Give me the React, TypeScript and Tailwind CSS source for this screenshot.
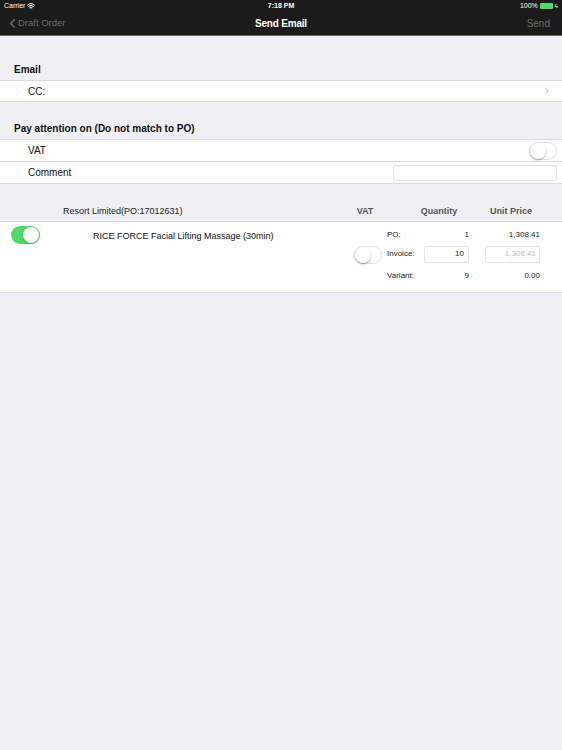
import { ChevronLeft, ChevronRight, Wifi } from 'lucide-react';

function Toggle({ on }: { on: boolean }) {
  return (
    <div
      className={
        on
          ? 'relative w-[29px] h-[18px] rounded-full bg-[#4cd964]'
          : 'relative w-[28px] h-[18px] rounded-full bg-white border border-[#e3e3e6]'
      }
    >
      <div
        className={
          on
            ? 'absolute right-[1px] top-[1px] w-[16px] h-[16px] rounded-full bg-white shadow-[0_1px_2px_rgba(0,0,0,0.3)]'
            : 'absolute left-0 top-0 w-[16px] h-[16px] rounded-full bg-white shadow-[0_1px_2px_rgba(0,0,0,0.35)]'
        }
      />
    </div>
  );
}

export default function App() {
  return (
    <div
      className="w-[562px] h-[750px] bg-[#efeff4] text-[#111] overflow-hidden antialiased"
      style={{ fontFamily: '"Liberation Sans", Arial, sans-serif' }}
    >
      {/* status + nav */}
      <div className="bg-[#1b1b1b] border-b border-[#6a6a6a]">
        <div className="h-[12px] flex items-center justify-between px-[4px] text-[7px] text-white">
          <div className="flex items-center gap-[2px] w-[100px]">
            Carrier <Wifi className="w-[8px] h-[8px]" strokeWidth={3} />
          </div>
          <div className="font-semibold">7:18 PM</div>
          <div className="flex items-center justify-end gap-[2px] w-[100px]">
            100%
            <div className="w-[13px] h-[6px] bg-[#4cd964] rounded-[1px]" />
            <span className="text-[6px]">ϟ</span>
          </div>
        </div>
        <div className="h-[23px] flex items-center justify-between px-[5px]">
          <div className="flex items-center text-[9.5px] text-[#6b6b6b] w-[100px]">
            <ChevronLeft className="w-[15px] h-[15px] -mr-[2px]" strokeWidth={2.5} />
            Draft Order
          </div>
          <div className="text-[10px] font-semibold text-white tracking-[-0.2px]">Send Email</div>
          <div className="w-[100px] text-right text-[10px] text-[#6b6b6b] pr-[7px]">Send</div>
        </div>
      </div>

      {/* Email */}
      <div className="pt-[26px] pb-[3px] px-[14px] text-[10px] font-bold">Email</div>
      <div className="bg-white border-y border-[#dcdce0] h-[22px] flex items-center justify-between pl-[28px] pr-[10px] text-[10px]">
        <span>CC:</span>
        <ChevronRight className="w-[10px] h-[10px] text-[#a8a8ad]" strokeWidth={2} />
      </div>

      {/* Pay attention */}
      <div className="pt-[19px] pb-[3px] px-[14px] text-[10px] font-bold">Pay attention on (Do not match to PO)</div>
      <div className="bg-white border-y border-[#dcdce0]">
        <div className="h-[22px] flex items-center justify-between pl-[28px] pr-[5px] text-[10px] border-b border-[#dcdce0]">
          <span>VAT</span>
          <Toggle on={false} />
        </div>
        <div className="h-[21px] flex items-center justify-between pl-[28px] pr-[5px] text-[10px]">
          <span>Comment</span>
          <div className="w-[164px] h-[16px] border border-[#e3e3e6] rounded-[2px]" />
        </div>
      </div>

      {/* Items header */}
      <div className="h-[37px] flex items-end pb-[3px] text-[9px]">
        <div className="pl-[63px] w-[340px] text-[#222]">Resort Limited(PO:17012631)</div>
        <div className="w-[50px] text-center font-bold text-[#555]">VAT</div>
        <div className="w-[98px] text-center font-bold text-[#555]">Quantity</div>
        <div className="w-[46px] text-center font-bold text-[#555] whitespace-nowrap">Unit Price</div>
      </div>

      {/* Item row */}
      <div className="bg-white border-y border-[#dcdce0] h-[72px] flex">
        <div className="pl-[11px] pt-[4px] w-[93px]">
          <Toggle on />
        </div>
        <div className="pt-[8px] w-[261px] text-[9px]">RICE FORCE Facial Lifting Massage (30min)</div>
        <div className="w-[33px] pt-[24px]">
          <Toggle on={false} />
        </div>
        <div className="flex flex-col text-[8px] text-[#222]">
          <div className="h-[23px] flex items-center pt-[2px]">
            <span className="w-[74px]">PO:</span>
            <span className="w-[8px] text-right">1</span>
            <span className="w-[71px] text-right">1,308.41</span>
          </div>
          <div className="h-[18px] flex items-center">
            <span className="w-[37px]">Invoice:</span>
            <div className="w-[45px] h-[17px] border border-[#e3e3e6] rounded-[2px] flex items-center justify-end pr-[4px]">10</div>
            <div className="ml-[16px] w-[55px] h-[17px] border border-[#e3e3e6] rounded-[2px] flex items-center justify-end pr-[3px] text-[#bbb]">1,308.41</div>
          </div>
          <div className="h-[24px] flex items-center pt-[2px]">
            <span className="w-[74px]">Variant:</span>
            <span className="w-[8px] text-right">9</span>
            <span className="w-[71px] text-right">0.00</span>
          </div>
        </div>
      </div>
    </div>
  );
}
